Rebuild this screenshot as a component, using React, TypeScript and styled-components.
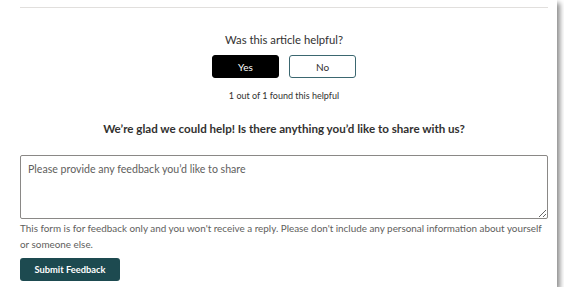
import styled, { createGlobalStyle } from "styled-components";

const Global = createGlobalStyle`
    html, body {
        margin: 0;
        padding: 0;
        background: #ffffff;
    }
    body {
        font-family: Lato, "Noto Sans", sans-serif;
        color: #323130;
    }
`;

const Card = styled.div`
    width: 557px;
    height: 287px;
    box-sizing: border-box;
    background: #ffffff;
    box-shadow: 3px 3px 5px rgba(0, 0, 0, 0.45);
    padding: 7px 9px 0 20px;
`;

const Rule = styled.hr`
    margin: 0;
    border: none;
    border-top: 1px solid #e1dfdd;
`;

const Helpful = styled.div`
    display: flex;
    flex-direction: column;
    align-items: center;
    padding-top: 24px;
`;

const Question = styled.div`
    font-size: 11.3px;
    line-height: 16px;
    color: #323130;
`;

const Buttons = styled.div`
    display: flex;
    gap: 10px;
    margin-top: 7px;
`;

const Choice = styled.button<{ $selected?: boolean }>`
    width: 67px;
    height: 23px;
    box-sizing: border-box;
    border-radius: 3px;
    font-family: inherit;
    font-size: 10px;
    cursor: pointer;
    background: ${(p) => (p.$selected ? "#000000" : "#ffffff")};
    color: ${(p) => (p.$selected ? "#ffffff" : "#323130")};
    border: 1px solid ${(p) => (p.$selected ? "#000000" : "#3b6770")};
`;

const Count = styled.div`
    margin-top: 11px;
    font-size: 9px;
    line-height: 13px;
    color: #323130;
`;

const Heading = styled.h2`
    margin: 18px 0 0;
    text-align: center;
    font-size: 11.6px;
    line-height: 17px;
    font-weight: 700;
    color: #323130;
`;

const Feedback = styled.textarea`
    display: block;
    width: 100%;
    height: 64px;
    box-sizing: border-box;
    margin-top: 18px;
    padding: 6px 7px;
    border: 1px solid #8a8886;
    border-radius: 2px;
    font-family: inherit;
    font-size: 10.6px;
    line-height: 15px;
    color: #323130;
    resize: vertical;

    &::placeholder {
        color: #605e5c;
    }
`;

const Note = styled.p`
    margin: 1px 0 0;
    font-size: 9.9px;
    line-height: 16px;
    color: #605e5c;
`;

const Submit = styled.button`
    margin-top: 6px;
    width: 100px;
    height: 23px;
    border: none;
    border-radius: 3px;
    background: #1d4a50;
    color: #ffffff;
    font-family: inherit;
    font-size: 9.3px;
    font-weight: 700;
    cursor: pointer;
`;

const App = (): JSX.Element => {
    return (
        <>
            <Global />
            <Card>
                <Rule />
                <Helpful>
                    <Question>Was this article helpful?</Question>
                    <Buttons>
                        <Choice $selected>Yes</Choice>
                        <Choice>No</Choice>
                    </Buttons>
                    <Count>1 out of 1 found this helpful</Count>
                </Helpful>
                <Heading>We’re glad we could help! Is there anything you’d like to share with us?</Heading>
                <Feedback placeholder="Please provide any feedback you’d like to share" />
                <Note>
                    This form is for feedback only and you won't receive a reply. Please don't include any personal
                    information about yourself or someone else.
                </Note>
                <Submit>Submit Feedback</Submit>
            </Card>
        </>
    );
};

export default App;
